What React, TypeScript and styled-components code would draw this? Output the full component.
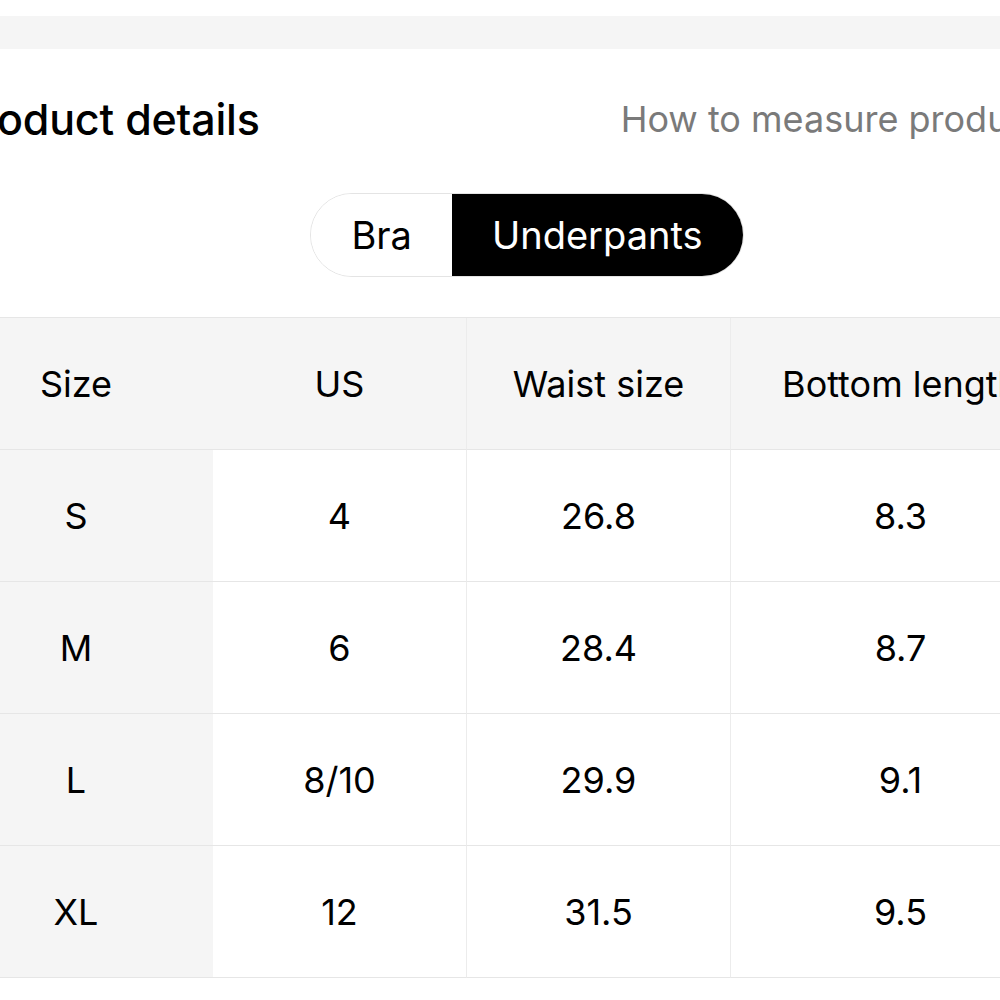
import React from "react";
import styled, { createGlobalStyle } from "styled-components";

const GlobalStyle = createGlobalStyle`
  html, body {
    margin: 0;
    padding: 0;
    background: #ffffff;
  }
  body {
    font-family: Inter, "Noto Sans", "Liberation Sans", sans-serif;
    color: #000000;
    -webkit-font-smoothing: antialiased;
  }
`;

const Page = styled.div`
  width: 1000px;
  height: 1000px;
  overflow: hidden;
  background: #ffffff;
`;

const Sheet = styled.div`
  margin-left: -61px;
  width: 1176px;
  padding-top: 16px;
`;

const TopBar = styled.div`
  height: 33px;
  background: #f5f5f5;
`;

const HeaderRow = styled.div`
  display: flex;
  align-items: center;
  height: 64px;
  margin-top: 38px;
  padding-left: 15px;
  white-space: nowrap;
`;

const Title = styled.h2`
  margin: 0;
  font-size: 43px;
  font-weight: 500;
  letter-spacing: -0.2px;
`;

const MeasureLink = styled.span`
  font-size: 36px;
  color: #7a7a7a;
  margin-left: 361px;
  flex: 1 0 auto;
`;

const ToggleWrap = styled.div`
  display: flex;
  justify-content: center;
  margin-top: 42px;
`;

const Toggle = styled.div`
  display: inline-flex;
  height: 84px;
  border: 1.5px solid #e4e4e4;
  border-radius: 42px;
  overflow: hidden;
  box-sizing: border-box;
`;

const Segment = styled.button<{ $active?: boolean }>`
  display: flex;
  align-items: center;
  padding: 0 40px;
  border: none;
  border-radius: 0;
  font-family: inherit;
  font-size: 38px;
  background: ${(p) => (p.$active ? "#000000" : "#ffffff")};
  color: ${(p) => (p.$active ? "#ffffff" : "#000000")};
`;

const Table = styled.div`
  display: grid;
  grid-template-columns: 274px 254px 264px 340px 120px;
  margin-top: 40px;
  border-top: 1.5px solid #e6e6e6;
`;

const Cell = styled.div<{ $head?: boolean; $first?: boolean }>`
  height: 131px;
  display: flex;
  align-items: center;
  justify-content: center;
  font-size: 36px;
  white-space: nowrap;
  overflow: hidden;
  background: ${(p) => (p.$head || p.$first ? "#f5f5f5" : "#ffffff")};
  border-bottom: 1.5px solid #e6e6e6;
  border-right: ${(p) => (p.$first ? "none" : "1px solid #ececec")};
`;

const columns = ["Size", "US", "Waist size", "Bottom length", "Hip"];

const rows = [
  ["S", "4", "26.8", "8.3", ""],
  ["M", "6", "28.4", "8.7", ""],
  ["L", "8/10", "29.9", "9.1", ""],
  ["XL", "12", "31.5", "9.5", ""],
];

export default function App() {
  return (
    <Page>
      <GlobalStyle />
      <Sheet>
        <TopBar />
        <HeaderRow>
          <Title>Product details</Title>
          <MeasureLink>How to measure product size</MeasureLink>
        </HeaderRow>
        <ToggleWrap>
          <Toggle>
            <Segment>Bra</Segment>
            <Segment $active>Underpants</Segment>
          </Toggle>
        </ToggleWrap>
        <Table>
          {columns.map((c, i) => (
            <Cell key={c} $head $first={i === 0}>
              {c}
            </Cell>
          ))}
          {rows.map((r) =>
            r.map((v, i) => (
              <Cell key={r[0] + i} $first={i === 0}>
                {v}
              </Cell>
            ))
          )}
        </Table>
      </Sheet>
    </Page>
  );
}
